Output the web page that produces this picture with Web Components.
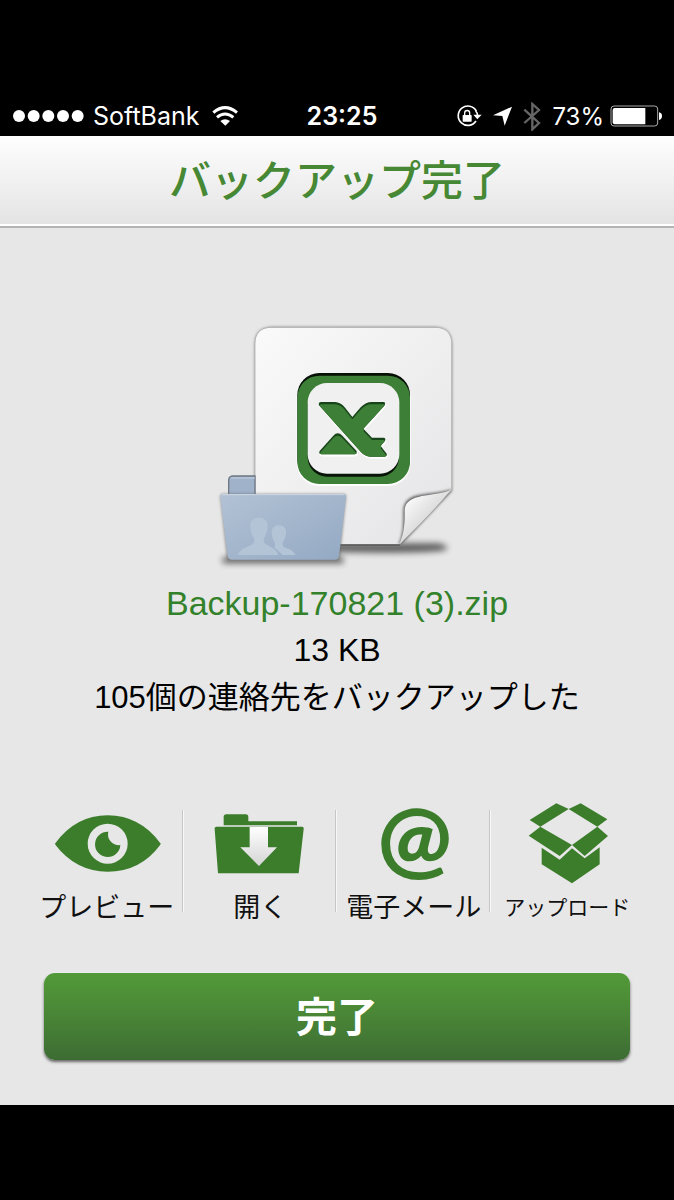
<!DOCTYPE html>
<html lang="ja">
<head>
<meta charset="utf-8">
<meta name="viewport" content="width=device-width, initial-scale=1">
<title>バックアップ完了</title>
<style>
  html, body {
    margin: 0;
    background: #000;
  }
  body {
    font-family: "Liberation Sans", "Noto Sans CJK JP", sans-serif;
  }
</style>
</head>
<body>
<backup-screen></backup-screen>

<script>
class StatusBar extends HTMLElement {
  constructor() {
    super();
    this.root = this.attachShadow({ mode: "open" });
  }

  connectedCallback() {
    this.render();
  }

  render() {
    this.root.innerHTML = `
    <style>
    :host {
      display: grid;
      grid-template-columns: 1fr auto 1fr;
      align-items: center;
      height: 40px;
      padding: 0 2px 0 12px;
      background: #000;
      color: #fff;
      font-family: Inter, sans-serif;
      font-size: 25px;
    }
    svg {
      display: block;
      flex: none;
    }
    .left, .right {
      display: flex;
      align-items: center;
    }
    .left {
      gap: 8px;
    }
    .wifi {
      margin-left: 4px;
    }
    .right {
      justify-content: flex-end;
      gap: 11px;
      padding-right: 10px;
      font-size: 24px;
    }
    .power {
      display: flex;
      align-items: center;
      gap: 6px;
    }
    .time {
      font-weight: 600;
    }
    </style>
    <div class="left">
      <svg width="73" height="14" viewBox="0 0 219 42" fill="#fff">
        <circle cx="21" cy="21" r="18"/><circle cx="65" cy="21" r="18"/><circle cx="109" cy="21" r="18"/><circle cx="153" cy="21" r="18"/><circle cx="197" cy="21" r="18"/>
      </svg>
      <span>${this.getAttribute("carrier")}</span>
      <svg class="wifi" width="26" height="20" viewBox="638 44 78 60" fill="none" stroke="#fff" stroke-width="9">
        <path d="M642 64Q677 34 713 64"/>
        <path d="M653 78Q677 58 702 78"/>
        <path d="M663 89Q677 79 692 89L678 103Z" fill="#fff" stroke="none"/>
      </svg>
    </div>
    <time class="time">${this.getAttribute("time")}</time>
    <div class="right">
      <svg width="26" height="24" viewBox="354 40 78 72">
        <path d="M415 61A29 29 0 1 0 414 91" fill="none" stroke="#fff" stroke-width="5"/>
        <path d="M413 61Q419 67 419 76" fill="none" stroke="#fff" stroke-width="5"/>
        <path d="M406 72H431L418 86Z" fill="#fff"/>
        <rect x="374" y="73" width="27" height="20" rx="2" fill="#fff"/>
        <path d="M380 74V67A7.500 7.500 0 0 1 395 67V74" fill="none" stroke="#fff" stroke-width="4"/>
      </svg>
      <svg width="19" height="20" viewBox="468 48 57 60">
        <path d="M525 50L503 107L496 78L468 76Z" fill="#fff"/>
      </svg>
      <svg width="18" height="29" viewBox="560 34 54 87" fill="none" stroke="#666" stroke-width="7">
        <path d="M564 57L608 97L588 116V40L608 58L564 97"/>
      </svg>
      <div class="power">
        <span>${this.getAttribute("battery")}</span>
        <svg width="52" height="22" viewBox="819 43 156 66">
          <rect x="822" y="46" width="140" height="60" rx="9" fill="none" stroke="#aaa" stroke-width="3"/>
          <path d="M833 52H925V101H833Q827 101 827 95V58Q827 52 833 52Z" fill="#fff"/>
          <path d="M966 65Q975 67 975 76T966 88Z" fill="#fff"/>
        </svg>
      </div>
    </div>`;
  }
}

class TitleBar extends HTMLElement {
  constructor() {
    super();
    this.root = this.attachShadow({ mode: "open" });
    this.root.innerHTML = `
    <style>
    :host {
      display: block;
      box-sizing: border-box;
      height: 92px;
      background: linear-gradient(#fefefe, #e3e3e3);
      border-bottom: 2px solid #b4b4b4;
      box-shadow: inset 0 -2px #fff;
    }
    h1 {
      margin: 0;
      color: #468834;
      font-family: "Noto Sans CJK JP", sans-serif;
      font-size: 42px;
      font-weight: 500;
      line-height: 84px;
      text-align: center;
    }
    </style>
    <h1><slot></slot></h1>`;
  }
}

class BackupArt extends HTMLElement {
  constructor() {
    super();
    this.root = this.attachShadow({ mode: "open" });
    this.root.innerHTML = `
    <style>
    :host {
      display: block;
    }
    svg {
      display: block;
      margin: 0 auto;
    }
    </style>
    <svg width="280" height="270" viewBox="-9 0 840 810" aria-hidden="true">
      <defs>
        <linearGradient id="sheet" x1="0" y1="0" x2="1" y2="1">
          <stop offset="0" stop-color="#fafafa"/><stop offset="1" stop-color="#e4e4e6"/>
        </linearGradient>
        <linearGradient id="curl" x1="0" y1="0" x2="1" y2="1">
          <stop offset="0.1" stop-color="#fff"/><stop offset="0.6" stop-color="#d6d6d6"/>
        </linearGradient>
        <linearGradient id="folder" x1="0" y1="0" x2="1" y2="1">
          <stop offset="0" stop-color="#b3c2d5"/><stop offset="1" stop-color="#93a9c3"/>
        </linearGradient>
        <filter id="soft" x="-20%" y="-100%" width="140%" height="300%"><feGaussianBlur stdDeviation="9"/></filter>
        <filter id="edge" x="-10%" y="-10%" width="120%" height="120%"><feGaussianBlur stdDeviation="4"/></filter>
        <path id="page" d="M215 53H705Q754 53 754 102V540L600 703H166V102Q166 53 215 53Z"/>
        <path id="mark" d="M363 276H405Q422 277 434 292L457 321L482 292Q498 276 515 276H552Q558 279 553 287L490 356L516 383H552Q559 386 554 394L542 408L560 431Q562 438 555 440H510Q495 439 482 425L357 286Q354 277 363 276Z"/>
        <path id="foot" d="M359 423L400 377Q413 363 427 377L469 422Q473 431 464 433H364Q355 431 359 423Z"/>
      </defs>
      <path d="M400 700H715Q755 710 735 720Q690 732 400 726Z" fill="#000" opacity="0.6" filter="url(#soft)"/>
      <use href="#page" fill="#777" stroke="#777" stroke-width="3" filter="url(#edge)"/>
      <path d="M400 704H600" stroke="#444" stroke-width="5"/>
      <use href="#page" fill="url(#sheet)"/>
      <path d="M753 540C700 562 615 540 612 600C612 650 612 675 598 703Z" fill="#333" stroke="#777" stroke-width="5" filter="url(#edge)"/>
      <path d="M753 540C700 562 618 547 614 600C615 650 610 675 598 703Q690 615 753 540Z" fill="url(#curl)"/>

      <rect x="290" y="194" width="342" height="334" rx="68" fill="#fff"/>
      <rect x="292" y="189" width="338" height="325" rx="66" fill="#061006"/>
      <rect x="292" y="197" width="338" height="325" rx="66" fill="#3d7f36"/>
      <rect x="323" y="228" width="274" height="272" rx="58" fill="#071507"/>
      <rect x="323" y="219" width="275" height="272" rx="58" fill="#f0f0f1"/>
      <g transform="translate(2 5)" fill="#fff" stroke="#fff" stroke-width="3"><use href="#mark"/><use href="#foot"/></g>
      <g fill="#174418"><use href="#mark"/><use href="#foot"/></g>
      <clipPath id="cut"><use href="#mark"/><use href="#foot"/></clipPath>
      <g clip-path="url(#cut)"><g transform="translate(0 7)" fill="#3d7f36"><use href="#mark"/><use href="#foot"/></g></g>

      <path d="M86 555V510Q87 498 100 498H165V555Z" fill="#9fb2ca" stroke="#6d7784" stroke-width="4"/>
      <path d="M92 504H165" stroke="#c5d2e2" stroke-width="3"/>
      <path d="M68 742H430V760H68Z" fill="#000" opacity="0.6" filter="url(#soft)"/>
      <path d="M61 560Q61 552 70 552H430Q439 552 438 561L419 740Q417 751 408 751H92Q83 750 81 740Z" fill="#666" opacity="0.7" filter="url(#edge)"/>
      <path d="M61 560Q61 552 70 552H430Q439 552 438 561L417 738Q415 749 406 749H94Q85 748 83 738Z" fill="url(#folder)"/>
      <path d="M66 554H434" stroke="#ccd7e4" stroke-width="3"/>
      <g fill="#b4c4d7">
        <path d="M114 735C120 710 158 710 163 695C165 685 151 670 151 650C150 633 161 623 177 623C193 623 204 633 203 650C203 670 190 682 191 694C194 708 228 711 235 735Z"/>
        <path d="M222 712C229 706 224 698 219 688C211 665 215 646 237 646C258 646 263 665 254 687C247 698 245 706 252 711C265 717 280 720 286 735H248Z"/>
      </g>
    </svg>`;
  }
}

class ActionItem extends HTMLElement {
  constructor() {
    super();
    this.root = this.attachShadow({ mode: "open" });
    this.root.innerHTML = `
    <style>
    :host {
      display: block;
      flex: 1 1 0;
      min-width: 0;
    }
    :host(:not(:last-of-type)) {
      background: linear-gradient(90deg, #c6c6c6 50%, #f8f8f8 50%) right 8px / 2px 102px no-repeat;
    }
    button {
      display: flex;
      flex-direction: column;
      align-items: center;
      width: 100%;
      padding: 0;
      border: 0;
      background: none;
      color: #111;
      font-family: "Noto Sans CJK JP", sans-serif;
      font-size: 27px;
      font-weight: 400;
      line-height: 40px;
      white-space: nowrap;
      cursor: pointer;
    }
    :host([small]) button {
      font-size: 21px;
    }
    ::slotted(svg) {
      display: block;
      width: 120px;
      height: 84px;
      overflow: visible;
    }
    </style>
    <button type="button"><slot name="icon"></slot><span><slot></slot></span></button>`;
  }
}

class DoneButton extends HTMLElement {
  constructor() {
    super();
    this.root = this.attachShadow({ mode: "open" });
    this.root.innerHTML = `
    <style>
    :host {
      display: block;
    }
    button {
      display: block;
      box-sizing: border-box;
      width: 100%;
      height: 87px;
      padding: 0 0 5px;
      border: 0;
      border-radius: 11px;
      background: linear-gradient(#529a38, #498536 50%, #3c6c33);
      box-shadow: 0 2px 3px #666, 0 -1px 1px #f4f4f4;
      color: #fff;
      font-family: "Noto Sans CJK JP", sans-serif;
      font-size: 41px;
      font-weight: 700;
      line-height: 82px;
      cursor: pointer;
    }
    </style>
    <button type="button"><slot></slot></button>`;
  }
}

class BackupScreen extends HTMLElement {
  constructor() {
    super();
    this.root = this.attachShadow({ mode: "open" });
  }

  connectedCallback() {
    this.render();
  }

  render() {
    this.root.innerHTML = `
    <style>
    :host {
      display: flex;
      flex-direction: column;
      box-sizing: border-box;
      min-height: 100vh;
      padding: 96px 0 95px;
      background: #000;
    }
    main {
      flex: 1;
      padding: 82px 0 45px;
      background: #e7e7e7;
    }
    p {
      margin: 0;
      color: #000;
      font-size: 32px;
      line-height: 47px;
      text-align: center;
    }
    .file {
      color: #33822b;
      font-size: 34px;
    }
    .summary {
      font-size: 31px;
    }
    .actions {
      display: flex;
      margin: 81px 30px 47px;
      fill: #3c7d2c;
    }
    done-button {
      margin: 0 44px;
    }
    </style>
    <status-bar carrier="SoftBank" time="23:25" battery="73%"></status-bar>
    <title-bar>バックアップ完了</title-bar>
    <main>
      <backup-art></backup-art>
      <p class="file">Backup-170821 (3).zip</p>
      <p>13 KB</p>
      <p class="summary">105個の連絡先をバックアップした</p>
      <div class="actions">
        <action-item>
          <svg slot="icon" viewBox="50 21 360 252" aria-hidden="true">
            <path d="M75 145Q136 61 232 61Q330 62 390 145V149Q330 230 232 230Q136 229 75 149Z"/>
            <circle cx="232" cy="146" r="60" fill="#e7e7e7"/>
            <path d="M234 110A38 38 0 1 0 270 150A32 32 0 0 1 234 110Z"/>
          </svg>
          プレビュー
        </action-item>
        <action-item>
          <svg slot="icon" viewBox="511 21 360 252" aria-hidden="true">
            <linearGradient id="arrow" x1="0" y1="0" x2="0" y2="1"><stop offset="0" stop-color="#fff"/><stop offset="1" stop-color="#d4d4d4"/></linearGradient>
            <path d="M582 91V66Q582 58 590 58H648Q656 58 656 66V79H802V91Z"/>
            <path d="M560 95H818Q823 96 822 102L807 235H565L555 102Q554 96 560 95Z"/>
            <path d="M660 96H715V157H742L688 213L632 157H660Z" fill="url(#arrow)"/>
          </svg>
          開く
        </action-item>
        <action-item>
          <svg slot="icon" viewBox="71 21 360 252" aria-hidden="true">
            <text x="253" y="222" text-anchor="middle" font-family="Lato" font-size="264" font-weight="900">@</text>
          </svg>
          電子メール
        </action-item>
        <action-item small>
          <svg slot="icon" viewBox="532 21 360 252" aria-hidden="true">
            <path d="M600 75L680 25L717 42L632 95ZM717 42L753 25L833 73L803 95ZM632 95L727 150L690 183L597 122ZM803 95L835 123L765 183L727 150Z"/>
            <path d="M636 158L690 194L727 160L765 190L810 157V208L727 265L636 208Z"/>
          </svg>
          アップロード
        </action-item>
      </div>
      <done-button>完了</done-button>
    </main>`;
  }
}

customElements.define("status-bar", StatusBar);
customElements.define("title-bar", TitleBar);
customElements.define("backup-art", BackupArt);
customElements.define("action-item", ActionItem);
customElements.define("done-button", DoneButton);
customElements.define("backup-screen", BackupScreen);
</script>
</body>
</html>
